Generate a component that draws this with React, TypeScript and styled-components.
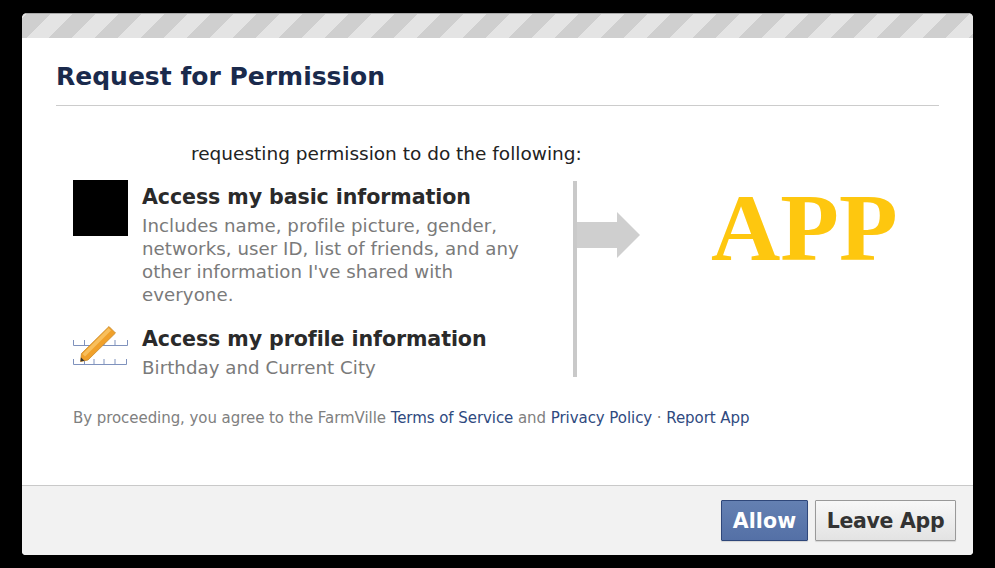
import React from 'react'
import styled, { createGlobalStyle } from 'styled-components'

const GlobalStyle = createGlobalStyle`
  html, body {
    margin: 0;
    height: 100%;
    background: #000;
  }
  body {
    font-family: "DejaVu Sans", "Noto Sans", sans-serif;
  }
`

const Screen = styled.div`
  width: 995px;
  height: 568px;
  padding: 13px 22px;
  box-sizing: border-box;
`

const Dialog = styled.div`
  width: 951px;
  height: 542px;
  display: flex;
  flex-direction: column;
  background: #fff;
  border-radius: 5px 5px 4px 4px;
  overflow: hidden;
`

const Stripes = styled.div`
  height: 25px;
  flex: none;
  box-sizing: border-box;
  border-top: 1px solid #a8a8a8;
  background: repeating-linear-gradient(
    135deg,
    #cfcfcf 3.5px,
    #cfcfcf 19.8px,
    #e4e4e4 19.8px,
    #e4e4e4 36px
  );
`

const Content = styled.div`
  flex: 1;
  padding: 22px 34px 0;
`

const Title = styled.h1`
  margin: 0;
  height: 45px;
  font-size: 25px;
  line-height: 34px;
  font-weight: bold;
  color: #1a2a4c;
  border-bottom: 1px solid #cccccc;
`

const Intro = styled.div`
  margin: 37px 0 0 135px;
  font-size: 18.5px;
  line-height: 22px;
  color: #222;
`

const Columns = styled.div`
  display: flex;
  margin: 15px 0 0 17px;
`

const Permissions = styled.div`
  width: 500px;
  flex: none;
  display: flex;
  flex-direction: column;
  gap: 16px;
`

const Permission = styled.div`
  display: flex;
  gap: 14px;
`

const IconSlot = styled.div<{ $filled?: boolean }>`
  width: 55px;
  height: 56px;
  flex: none;
  background: ${p => (p.$filled ? '#000' : 'transparent')};
`

const PermissionTitle = styled.div`
  margin: 1px 0;
  font-size: 20.6px;
  line-height: 32px;
  font-weight: bold;
  color: #2a2a2a;
  letter-spacing: -0.1px;
`

const PermissionText = styled.div`
  width: 390px;
  font-size: 18.2px;
  line-height: 23px;
  color: #7a7a7a;
  letter-spacing: 0.05px;
`

const Flow = styled.div`
  width: 4px;
  height: 196px;
  margin-top: 1px;
  flex: none;
  background: #c9c9c9;
  position: relative;
`

const FlowArrow = styled.svg`
  position: absolute;
  left: 4px;
  top: 31px;
`

const AppBox = styled.div`
  flex: 1;
  padding: 0 0 0 134px;
  font-family: "Liberation Serif", "Times New Roman", serif;
  font-weight: bold;
  font-size: 96px;
  line-height: 96px;
  color: #fec70f;
`

const Terms = styled.div`
  margin: 28px 0 0 17px;
  font-size: 15px;
  line-height: 22px;
  color: #808080;
  letter-spacing: -0.06px;
`

const TermsLink = styled.a`
  color: #2f4a7f;
  text-decoration: none;
`

const Footer = styled.div`
  height: 70px;
  flex: none;
  display: flex;
  justify-content: flex-end;
  gap: 7px;
  padding: 14px 17px 0 0;
  box-sizing: border-box;
  background: #f2f2f2;
  border-top: 1px solid #c9c9c9;
`

const Button = styled.button<{ $primary?: boolean }>`
  height: 41px;
  padding: 0;
  font-family: inherit;
  font-size: 20.5px;
  font-weight: bold;
  box-sizing: border-box;
  border-radius: 1px;
  width: ${p => (p.$primary ? '87px' : '141px')};
  color: ${p => (p.$primary ? '#fff' : '#333')};
  border: 1px solid ${p => (p.$primary ? '#2f477a' : '#999')};
  background: ${p => (p.$primary ? 'linear-gradient(#6480b2, #5470a6)' : 'linear-gradient(#f7f7f7, #e3e3e3)')};
  box-shadow: 0 1px 1px rgba(0, 0, 0, 0.12);
  letter-spacing: ${p => (p.$primary ? '0.1px' : '-0.3px')};
`

const PencilIcon = () => (
  <svg width="55" height="56" viewBox="0 0 55 56">
    <path
      d="M0.5 18v5.5H54.5V18M11.5 18v5M42 18v5M31 18v5M0.5 37v5.5H53.5V37M11.5 37v5M21 37v5M31 37v5M42 37v5"
      stroke="#7f92bd"
      strokeWidth="1"
      fill="none"
    />
    <path d="M36 4.5 L42.5 11 L15 38 L7.5 39.5 L8.5 31.5 Z" fill="#f0a02a" stroke="#c98a2a" strokeWidth="0.8" />
    <path d="M35.5 6 L38 8.5 L12 34.5 L9.5 32 Z" fill="#f8bf5c" />
    <path d="M7.5 39.5 L8 35.5 L11.5 38.7 Z" fill="#333" />
  </svg>
)

export default function App() {
  return (
    <Screen>
      <GlobalStyle />
      <Dialog>
        <Stripes />
        <Content>
          <Title>Request for Permission</Title>
          <Intro>requesting permission to do the following:</Intro>
          <Columns>
            <Permissions>
              <Permission>
                <IconSlot $filled />
                <div>
                  <PermissionTitle>Access my basic information</PermissionTitle>
                  <PermissionText>
                    Includes name, profile picture, gender, networks, user ID, list of friends, and any other information I've shared with everyone.
                  </PermissionText>
                </div>
              </Permission>
              <Permission>
                <IconSlot><PencilIcon /></IconSlot>
                <div>
                  <PermissionTitle>Access my profile information</PermissionTitle>
                  <PermissionText>Birthday and Current City</PermissionText>
                </div>
              </Permission>
            </Permissions>
            <Flow>
              <FlowArrow width="63" height="46" viewBox="0 0 63 46">
                <path d="M0 10H40V0L63 23L40 46V36H0Z" fill="#cfcfcf" />
              </FlowArrow>
            </Flow>
            <AppBox>APP</AppBox>
          </Columns>
          <Terms>
            By proceeding, you agree to the FarmVille <TermsLink href="#">Terms of Service</TermsLink> and <TermsLink href="#">Privacy Policy</TermsLink> · <TermsLink href="#">Report App</TermsLink>
          </Terms>
        </Content>
        <Footer>
          <Button $primary>Allow</Button>
          <Button>Leave App</Button>
        </Footer>
      </Dialog>
    </Screen>
  )
}
